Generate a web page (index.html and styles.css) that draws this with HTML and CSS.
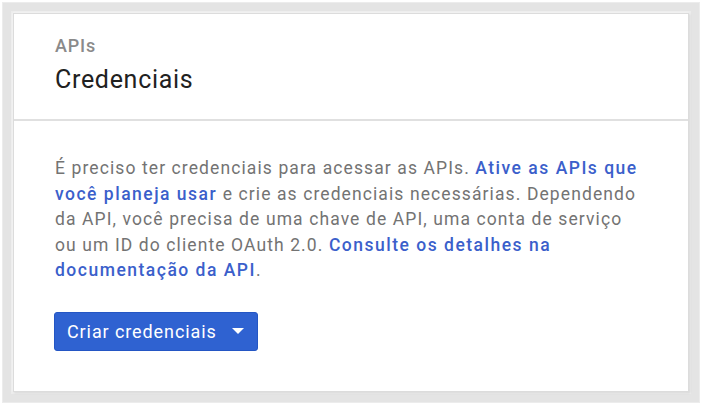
FILE: index.html
```html
<!DOCTYPE html>
<html lang="pt-BR">
<head>
<meta charset="UTF-8">
<title>Credenciais</title>
<link rel="stylesheet" href="styles.css">
</head>
<body>

<div class="frame">
  <div class="card">
    <div class="card-header">
      <div class="eyebrow">APIs</div>
      <h1 class="title">Credenciais</h1>
    </div>
    <div class="card-body">
      <p class="intro">
        É preciso ter credenciais para acessar as APIs. <a href="#">Ative as APIs que você planeja usar</a> e crie as credenciais necessárias. Dependendo da API, você precisa de uma chave de API, uma conta de serviço ou um ID do cliente OAuth 2.0. <a href="#">Consulte os detalhes na documentação da API</a>.
      </p>
      <button class="btn-primary" type="button">
        Criar credenciais
        <span class="caret"></span>
      </button>
    </div>
  </div>
</div>

</body>
</html>
```

FILE: styles.css
```css
/* page + outer frame */
body {
  margin: 0;
  padding: 2px 3px 3px 2px;
  background-color: #fff;
  font-family: Roboto, "Noto Sans", Arial, sans-serif;
}
.frame {
  width: 676px;
  height: 379px;
  padding: 10px;
  background-color: #fff;
  border: 1px solid #ececec;
  box-shadow: inset 0 0 0 8px #e4e4e4, inset 0 0 3px 10px #ececec;
}
.card {
  height: 100%;
  box-sizing: border-box;
  background-color: #fff;
  border: 1px solid #dcdcdc;
  box-shadow: 1px 1px 2px rgba(0, 0, 0, 0.12);
}

/* header */
.card-header {
  padding: 22px 0 0 41px;
  height: 83px;
  border-bottom: 2px solid #e0e0e0;
}
.eyebrow {
  font-size: 18px;
  font-weight: 500;
  letter-spacing: 0.8px;
  color: #8a8a8a;
  line-height: 20px;
}
.title {
  margin: 9px 0 0;
  font-size: 25px;
  font-weight: 400;
  letter-spacing: 0.7px;
  color: #212121;
  line-height: 30px;
}

/* body */
.card-body {
  padding: 35px 41px 0;
}
.intro {
  margin: 0;
  width: 584px;
  font-size: 17.5px;
  line-height: 25.5px;
  letter-spacing: 1.1px;
  color: #737373;
}
.intro a {
  color: #3b5fcb;
  font-weight: 500;
  letter-spacing: 1.5px;
  text-decoration: none;
}
.btn-primary {
  margin-top: 28px;
  margin-left: -1px;
  display: inline-flex;
  align-items: center;
  gap: 15px;
  height: 39px;
  padding: 0 13px 0 12px;
  background-color: #2f62d1;
  border: 1px solid #2456c4;
  border-radius: 3px;
  color: #fff;
  font-family: inherit;
  font-size: 18px;
  letter-spacing: 0.9px;
}
.caret {
  width: 0;
  height: 0;
  border-left: 6px solid transparent;
  border-right: 6px solid transparent;
  border-top: 6px solid #fff;
}
```
